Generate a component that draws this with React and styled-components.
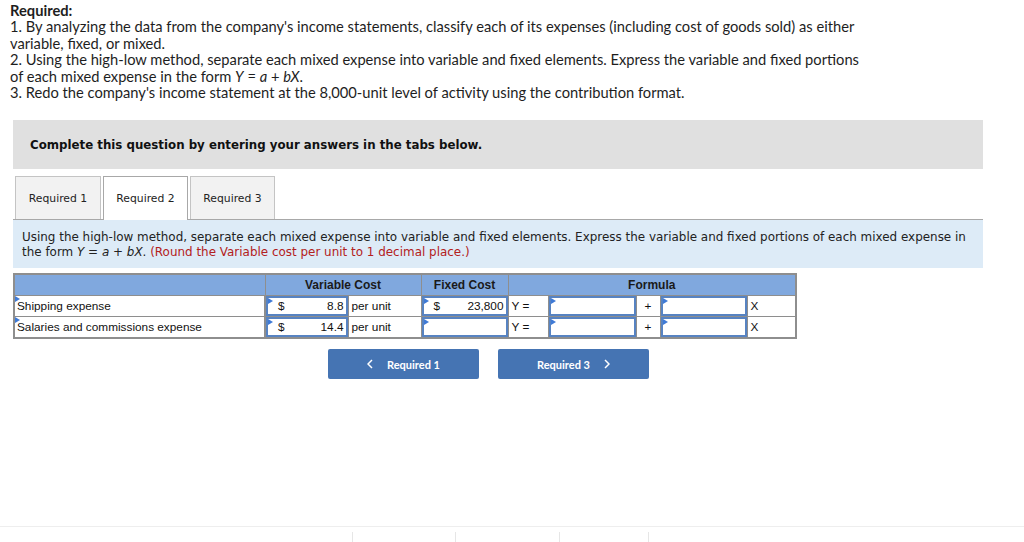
import React from 'react'
import styled, { createGlobalStyle } from 'styled-components'

const Global = createGlobalStyle`
  body {
    margin: 0;
    background: #fff;
    color: #222;
  }
`

const Page = styled.div`
  width: 1024px;
  height: 542px;
  display: flex;
  flex-direction: column;
  overflow: hidden;
`

const Intro = styled.div`
  padding: 2px 0 0 10px;
  font-family: Lato, "Open Sans", sans-serif;
  font-size: 14.7px;
  line-height: 16.4px;
  color: #1e1e1e;
  white-space: nowrap;
`

const Heading = styled.div`
  font-weight: 700;
`

const Em = styled.span`
  font-style: italic;
`

const Banner = styled.div`
  margin: 20px 41px 0 13px;
  height: 49px;
  background: #e0e0e0;
  display: flex;
  align-items: center;
  padding-left: 17px;
  font-family: "DejaVu Sans", Verdana, sans-serif;
  font-weight: 700;
  font-size: 11.8px;
  color: #111;
`

const TabBar = styled.div`
  margin: 7px 41px 0 13px;
  display: flex;
  gap: 2px;
  padding-left: 2px;
  border-bottom: 1px solid #a8a8a8;
  height: 43px;
`

const Tab = styled.div`
  box-sizing: border-box;
  width: ${p => p.w}px;
  display: flex;
  align-items: center;
  justify-content: center;
  font-family: "DejaVu Sans", Verdana, sans-serif;
  font-size: 10.8px;
  color: #222;
  border: 1px solid #c4c4c4;
  border-bottom: none;
  background: ${p => (p.active ? '#fff' : '#f2f2f2')};
  margin-bottom: ${p => (p.active ? '-1px' : '0')};
  border-color: ${p => (p.active ? '#a8a8a8' : '#c4c4c4')};
`

const Instruction = styled.div`
  margin: 0 41px 0 13px;
  background: #ddebf7;
  padding: 10px 9px 9px;
  font-family: "DejaVu Sans", Verdana, sans-serif;
  font-size: 11.95px;
  line-height: 14.5px;
  color: #222;
  white-space: nowrap;
`

const Red = styled.span`
  color: #b32121;
`

const Grid = styled.table`
  margin: 5px 0 0 13px;
  border-collapse: collapse;
  font-family: "Liberation Sans", Arial, sans-serif;
  font-size: 11.8px;
  color: #111;
  table-layout: fixed;
  width: 782px;
  border: 2px solid #8e8e8e;
`

const Head = styled.th`
  background: #80a8de;
  height: 20px;
  padding: 0;
  font-weight: 700;
  font-size: 12px;
  text-align: center;
  border: 1px solid #8e8e8e;
  color: #1a1a1a;
`

const Cell = styled.td`
  height: 20px;
  padding: 0 3px;
  border: 1px solid #8e8e8e;
  text-align: ${p => p.align || 'left'};
  white-space: nowrap;
  background: #fff;
`

const Field = styled.td`
  height: 20px;
  padding: 0;
  border: 1px solid #8e8e8e;
  position: relative;
  background: #fff;
  &::before {
    content: '';
    position: absolute;
    left: 2px;
    top: 2px;
    border-top: 3px solid transparent;
    border-bottom: 3px solid transparent;
    border-left: 5px solid #3f7ad6;
  }
`

const FieldBox = styled.div`
  border: 2px solid #5783c2;
  box-sizing: border-box;
  height: 20px;
  display: flex;
  align-items: center;
  justify-content: space-between;
  padding: 0 2px 0 10px;
`

const Label = styled.td`
  height: 20px;
  padding: 0 0 0 2px;
  border: 1px solid #8e8e8e;
  border-right: 2px solid #8e8e8e;
  position: relative;
  background: #fff;
  &::before {
    content: '';
    position: absolute;
    left: 0;
    top: 0;
    border-top: 3px solid transparent;
    border-bottom: 3px solid transparent;
    border-left: 5px solid #3f7ad6;
  }
`

const Nav = styled.div`
  display: flex;
  gap: 19px;
  margin: 10px 0 0 328px;
`

const NavButton = styled.div`
  width: 151px;
  height: 30px;
  background: #4574b3;
  border-radius: 2px;
  color: #fff;
  font-family: Lato, "Open Sans", sans-serif;
  font-weight: 700;
  font-size: 11px;
  display: flex;
  align-items: center;
  justify-content: center;
  gap: 14px;
`

const Spacer = styled.div`
  flex: 1;
`

const Footer = styled.div`
  height: 15px;
  border-top: 1px solid #eeeeee;
  display: flex;
  align-items: flex-end;
`

const Tick = styled.div`
  width: 1px;
  height: 10px;
  background: #e6e6e6;
  margin-left: ${p => p.at}px;
`

const Chevron = ({ dir }) => (
  <svg width="6" height="10" viewBox="0 0 6 10">
    <path
      d={dir === 'left' ? 'M5 1 L1 5 L5 9' : 'M1 1 L5 5 L1 9'}
      fill="none"
      stroke="#fff"
      strokeWidth="1.5"
    />
  </svg>
)

const rows = [
  { name: 'Shipping expense', vc: '8.8', fc: '23,800' },
  { name: 'Salaries and commissions expense', vc: '14.4', fc: '' }
]

export default function App() {
  return (
    <Page>
      <Global />
      <Intro>
        <Heading>Required:</Heading>
        <div>1. By analyzing the data from the company's income statements, classify each of its expenses (including cost of goods sold) as either</div>
        <div>variable, fixed, or mixed.</div>
        <div>2. Using the high-low method, separate each mixed expense into variable and fixed elements. Express the variable and fixed portions</div>
        <div>
          of each mixed expense in the form <Em>Y</Em> = <Em>a</Em> + <Em>bX</Em>.
        </div>
        <div>3. Redo the company's income statement at the 8,000-unit level of activity using the contribution format.</div>
      </Intro>

      <Banner>Complete this question by entering your answers in the tabs below.</Banner>

      <TabBar>
        <Tab w={86}>Required 1</Tab>
        <Tab w={85} active>Required 2</Tab>
        <Tab w={85}>Required 3</Tab>
      </TabBar>

      <Instruction>
        <div>Using the high-low method, separate each mixed expense into variable and fixed elements. Express the variable and fixed portions of each mixed expense in</div>
        <div>
          the form <Em>Y</Em> = <Em>a</Em> + <Em>bX</Em>. <Red>(Round the Variable cost per unit to 1 decimal place.)</Red>
        </div>
      </Instruction>

      <Grid>
        <colgroup>
          <col style={{ width: 251 }} />
          <col style={{ width: 83 }} />
          <col style={{ width: 73 }} />
          <col style={{ width: 87 }} />
          <col style={{ width: 40 }} />
          <col style={{ width: 88 }} />
          <col style={{ width: 24 }} />
          <col style={{ width: 87 }} />
          <col style={{ width: 49 }} />
        </colgroup>
        <thead>
          <tr>
            <Head />
            <Head colSpan={2}>Variable Cost</Head>
            <Head>Fixed Cost</Head>
            <Head colSpan={5}>Formula</Head>
          </tr>
        </thead>
        <tbody>
          {rows.map(r => (
            <tr key={r.name}>
              <Label>{r.name}</Label>
              <Field>
                <FieldBox>
                  <span>$</span>
                  <span>{r.vc}</span>
                </FieldBox>
              </Field>
              <Cell>per unit</Cell>
              <Field>
                <FieldBox>
                  <span>{r.fc ? '$' : ''}</span>
                  <span>{r.fc}</span>
                </FieldBox>
              </Field>
              <Cell>Y =</Cell>
              <Field>
                <FieldBox />
              </Field>
              <Cell align="center">+</Cell>
              <Field>
                <FieldBox />
              </Field>
              <Cell>X</Cell>
            </tr>
          ))}
        </tbody>
      </Grid>

      <Nav>
        <NavButton>
          <Chevron dir="left" />
          Required 1
        </NavButton>
        <NavButton>
          Required 3
          <Chevron dir="right" />
        </NavButton>
      </Nav>

      <Spacer />
      <Footer>
        <Tick at={352} />
        <Tick at={102} />
        <Tick at={103} />
        <Tick at={88} />
      </Footer>
    </Page>
  )
}
